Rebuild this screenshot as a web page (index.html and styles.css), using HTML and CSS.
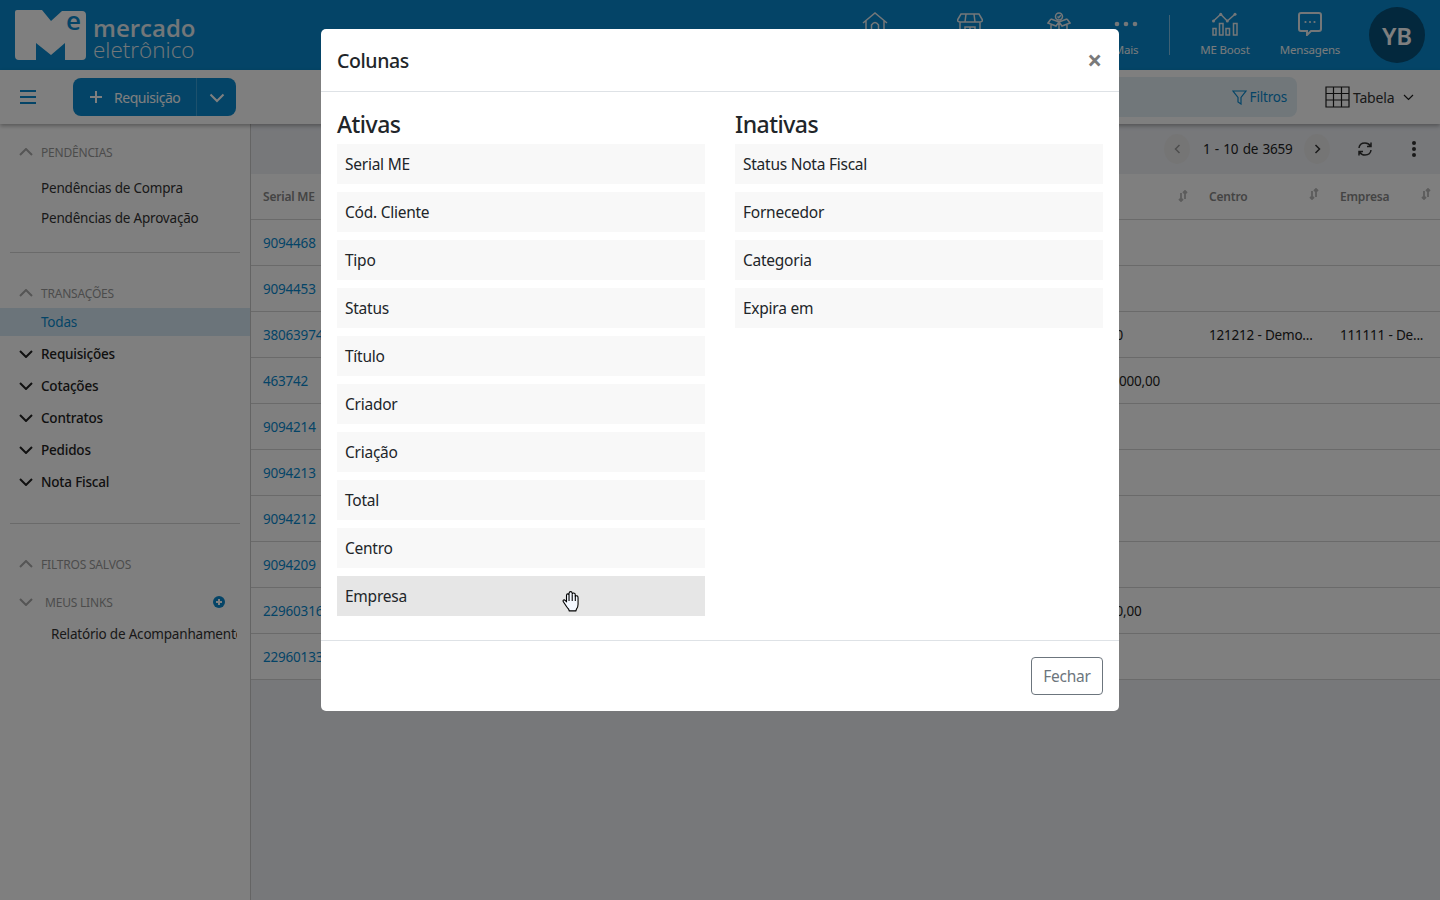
FILE: index.html
```html
<!DOCTYPE html>
<html lang="en">
<head>
    <meta charset="UTF-8">
    <title>Mercado Eletrônico</title>
    <link rel="stylesheet" href="styles.css">
</head>
<body>

<header class="topbar">
    <div class="logo">
        <svg class="logo-mark" width="71" height="50" viewBox="0 0 71 50">
            <path d="M2 0H27L36 11L47 1H67Q71 1 71 5V46Q71 50 67 50H50V33L36 45L21 33V50H4Q0 50 0 46V2Q0 0 2 0Z"/>
            <text x="51" y="20" class="logo-e">e</text>
        </svg>
        <div class="logo-text">
            <span class="logo-top">mercado</span>
            <span class="logo-bottom">eletrônico</span>
        </div>
    </div>
    <nav class="topnav">
        <a class="nav-item nav-home">
            <svg width="26" height="24" viewBox="0 0 26 24"><path d="M1 11L13 1L25 11M4 9V24H22V9M9.500 24V13Q13 8 16.500 13V24"/></svg>
            <span>Início</span>
        </a>
        <a class="nav-item nav-store">
            <svg width="26" height="24" viewBox="0 0 26 24"><path d="M4 2H22L25.500 8Q25.500 10 23 10H3Q0.500 10 0.500 8ZM9 2L8 10M17 2L18 10M3 10V24H23V10M8 24V15H13V24M13 15H18V24"/></svg>
            <span>Loja</span>
        </a>
        <a class="nav-item nav-gift">
            <svg width="24" height="24" viewBox="0 0 24 24"><path d="M4 7L12 10L20 7M4 7L1 11L9 14L12 10L15 14L23 11L20 7M4 13V24H20V13M12 10V24M8.500 4.500A3.500 3.500 0 1 1 15.500 4.500A3.500 3.500 0 1 1 8.500 4.500M10.500 4.500L11.700 5.700L13.800 3.300"/></svg>
            <span>Serviços</span>
        </a>
        <a class="nav-item nav-more">
            <svg width="24" height="24" viewBox="0 0 24 24"><circle class="dot" cx="3" cy="12" r="2.300"/><circle class="dot" cx="12" cy="12" r="2.300"/><circle class="dot" cx="21" cy="12" r="2.300"/></svg>
            <span>Mais</span>
        </a>
        <div class="nav-divider"></div>
        <a class="nav-item nav-boost">
            <svg width="26" height="24" viewBox="0 0 26 24"><path d="M1.500 9L8.700 2.300L15.300 9L23 2.300M1 16.500H4V23H1ZM7.500 11.500H11V23H7.500ZM14 16.500H17.500V23H14ZM21.500 11.500H25V23H21.500Z"/><circle class="dot" cx="1.500" cy="9" r="1.500"/><circle class="dot" cx="8.700" cy="2.300" r="1.500"/><circle class="dot" cx="15.300" cy="9" r="1.500"/><circle class="dot" cx="23" cy="2.300" r="1.500"/></svg>
            <span>ME Boost</span>
        </a>
        <a class="nav-item nav-msg">
            <svg class="msg-icon" width="24" height="24" viewBox="0 0 24 24"><path d="M3 1H21Q23 1 23 3V17Q23 19 21 19H13L9 23V19H3Q1 19 1 17V3Q1 1 3 1Z"/><circle class="dot" cx="7.500" cy="10" r="1.100"/><circle class="dot" cx="12" cy="10" r="1.100"/><circle class="dot" cx="16.500" cy="10" r="1.100"/></svg>
            <span>Mensagens</span>
        </a>
        <div class="avatar">YB</div>
    </nav>
</header>

<div class="toolbar">
    <svg class="burger" width="16" height="14" viewBox="0 0 16 14"><path d="M0 1H16M0 7H16M0 13H16"/></svg>
    <div class="btn-split">
        <button class="btn-main">
            <svg class="plus" width="14" height="14" viewBox="0 0 14 14"><path d="M7 1V13M1 7H13"/></svg>
            Requisição
        </button>
        <button class="btn-caret">
            <svg width="16" height="10" viewBox="0 0 16 10"><path d="M1.500 1.500L8 8L14.500 1.500"/></svg>
        </button>
    </div>
    <div class="filter-box">
        <svg width="15" height="15" viewBox="0 0 15 15"><path d="M1 1H14L9 7.500V14L6 12V7.500Z"/></svg>
        Filtros
    </div>
    <div class="view-select">
        <svg width="25" height="22" viewBox="0 0 25 22"><path d="M1 1H24V21H1ZM1 7.500H24M1 14H24M8.500 1V21M16.500 1V21"/></svg>
        Tabela
        <svg class="view-caret" width="11" height="7" viewBox="0 0 11 7"><path d="M1 1L5.500 5.500L10 1"/></svg>
    </div>
</div>

<div class="content">
    <aside class="sidebar">
        <div class="side-title"><svg class="chev" viewBox="0 0 14 8"><path d="M1 7L7 1L13 7"/></svg>Pendências</div>
        <a class="side-link side-link-first">Pendências de Compra</a>
        <a class="side-link">Pendências de Aprovação</a>
        <hr class="side-rule">
        <div class="side-title"><svg class="chev" viewBox="0 0 14 8"><path d="M1 7L7 1L13 7"/></svg>Transações</div>
        <a class="side-active">Todas</a>
        <a class="side-group"><svg class="chev" viewBox="0 0 14 8"><path d="M1 1L7 7L13 1"/></svg>Requisições</a>
        <a class="side-group"><svg class="chev" viewBox="0 0 14 8"><path d="M1 1L7 7L13 1"/></svg>Cotações</a>
        <a class="side-group"><svg class="chev" viewBox="0 0 14 8"><path d="M1 1L7 7L13 1"/></svg>Contratos</a>
        <a class="side-group"><svg class="chev" viewBox="0 0 14 8"><path d="M1 1L7 7L13 1"/></svg>Pedidos</a>
        <a class="side-group"><svg class="chev" viewBox="0 0 14 8"><path d="M1 1L7 7L13 1"/></svg>Nota Fiscal</a>
        <hr class="side-rule side-rule-2">
        <div class="side-title"><svg class="chev" viewBox="0 0 14 8"><path d="M1 7L7 1L13 7"/></svg>Filtros salvos</div>
        <div class="side-links-head">
            <svg class="chev" viewBox="0 0 14 8"><path d="M1 1L7 7L13 1"/></svg>
            <span>Meus links</span>
            <svg class="add-link" width="12" height="12" viewBox="0 0 12 12"><circle cx="6" cy="6" r="6"/><path d="M6 3V9M3 6H9"/></svg>
        </div>
        <a class="side-sublink">Relatório de Acompanhamento</a>
    </aside>

    <main class="main">
        <div class="pager-bar">
            <span class="round-btn"><svg width="7" height="10" viewBox="0 0 7 10"><path d="M5.500 1L1.500 5L5.500 9"/></svg></span>
            <span class="pager-text">1 - 10 de 3659</span>
            <span class="round-btn round-next"><svg width="7" height="10" viewBox="0 0 7 10"><path d="M1.500 1L5.500 5L1.500 9"/></svg></span>
            <svg class="refresh" width="16" height="16" viewBox="0 0 16 16"><path d="M2 7Q2.500 2 8 2Q11.500 2 13.500 5M14 1.500V5.500H10M14 9Q13.500 14 8 14Q4.500 14 2.500 11M2 14.500V10.500H6"/></svg>
            <svg class="kebab" width="4" height="16" viewBox="0 0 4 16"><circle cx="2" cy="2" r="2"/><circle cx="2" cy="8" r="2"/><circle cx="2" cy="14" r="2"/></svg>
        </div>
        <table class="grid">
            <colgroup>
                <col class="col-serial">
                <col class="col-middle">
                <col class="col-total">
                <col class="col-centro">
                <col class="col-empresa">
            </colgroup>
            <thead>
                <tr>
                    <th>Serial ME</th>
                    <th></th>
                    <th><svg class="sort" width="10" height="12" viewBox="0 0 10 12"><path d="M3 3V11M1 9L3 11L5 9M7 9V1M5 3L7 1L9 3"/></svg></th>
                    <th>Centro<svg class="sort" width="10" height="12" viewBox="0 0 10 12"><path d="M3 3V11M1 9L3 11L5 9M7 9V1M5 3L7 1L9 3"/></svg></th>
                    <th>Empresa<svg class="sort" width="10" height="12" viewBox="0 0 10 12"><path d="M3 3V11M1 9L3 11L5 9M7 9V1M5 3L7 1L9 3"/></svg></th>
                </tr>
            </thead>
            <tbody>
                <tr><td><a>9094468</a></td><td></td><td></td><td></td><td></td></tr>
                <tr><td><a>9094453</a></td><td></td><td></td><td></td><td></td></tr>
                <tr><td><a>38063974</a></td><td></td><td>R$ 100,00</td><td>121212 - Demo...</td><td>111111 - De...</td></tr>
                <tr><td><a>463742</a></td><td></td><td>R$ 1.000.000,00</td><td></td><td></td></tr>
                <tr><td><a>9094214</a></td><td></td><td></td><td></td><td></td></tr>
                <tr><td><a>9094213</a></td><td></td><td></td><td></td><td></td></tr>
                <tr><td><a>9094212</a></td><td></td><td></td><td></td><td></td></tr>
                <tr><td><a>9094209</a></td><td></td><td></td><td></td><td></td></tr>
                <tr><td><a>22960316</a></td><td></td><td>R$ 10.000,00</td><td></td><td></td></tr>
                <tr><td><a>22960133</a></td><td></td><td></td><td></td><td></td></tr>
            </tbody>
        </table>
    </main>
</div>

<div class="backdrop"></div>

<div class="modal-wrap">
    <div class="modal">
        <div class="modal-header">
            <h5>Colunas</h5>
            <button class="modal-close">×</button>
        </div>
        <div class="modal-body">
            <div class="col-list">
                <h3>Ativas</h3>
                <div class="col-item">Serial ME</div>
                <div class="col-item">Cód. Cliente</div>
                <div class="col-item">Tipo</div>
                <div class="col-item">Status</div>
                <div class="col-item">Título</div>
                <div class="col-item">Criador</div>
                <div class="col-item">Criação</div>
                <div class="col-item">Total</div>
                <div class="col-item">Centro</div>
                <div class="col-item col-item-hover">
                    Empresa
                    <svg class="hand" width="22" height="22" viewBox="0 0 20 20">
                        <path d="M5 15L2 10.500Q1.500 9 3 9L5 10.500V5Q5 3.500 6.200 3.500Q7 3.500 7.300 4.500V3Q7.500 1.500 8.800 1.500Q10 1.500 10.200 3V4Q10.500 2.500 11.800 2.800Q13 3 13 4.500V6Q13.500 5 14.500 5.300Q15.500 5.600 15.500 7V13Q15.500 16 14 17.500L13.500 19H7.500L7 17.500Q6 16.500 5 15Z"/>
                        <path class="hand-line" d="M7.300 4.500V10M10.200 4V10M13 5V10"/>
                    </svg>
                </div>
            </div>
            <div class="col-list">
                <h3>Inativas</h3>
                <div class="col-item">Status Nota Fiscal</div>
                <div class="col-item">Fornecedor</div>
                <div class="col-item">Categoria</div>
                <div class="col-item">Expira em</div>
            </div>
        </div>
        <div class="modal-footer">
            <button class="btn-close-modal">Fechar</button>
        </div>
    </div>
</div>

</body>
</html>
```

FILE: styles.css
```css
* {
    box-sizing: border-box;
}
body {
    font-family: "Noto Sans", "Open Sans", sans-serif;
    font-size: 13.5px;
    letter-spacing: -0.2px;
    color: #212529;
    background-color: #eef0f5;
    margin: 0;
    height: 900px;
    overflow: hidden;
}
svg path {
    fill: none;
}

/* top bar */
.topbar {
    display: flex;
    align-items: center;
    justify-content: space-between;
    height: 70px;
    background-color: #0889ce;
    padding: 0 15px;
}
.logo {
    display: flex;
    align-items: center;
    gap: 7px;
}
.logo-mark {
    display: block;
    overflow: visible;
}
.logo-mark path {
    fill: #ffffff;
}
.logo-e {
    font-family: "Open Sans", sans-serif;
    font-size: 26px;
    font-weight: 600;
    fill: #0889ce;
}
.logo-text {
    display: flex;
    flex-direction: column;
    gap: 1px;
    margin-top: 7px;
    color: #e6eef3;
    letter-spacing: 0;
}
.logo-top {
    font-family: "Open Sans", sans-serif;
    font-size: 24px;
    font-weight: 600;
    line-height: 22px;
}
.logo-bottom {
    font-family: "Open Sans", sans-serif;
    font-size: 22.5px;
    font-weight: 300;
    line-height: 20px;
}
.topnav {
    display: flex;
    align-items: center;
}
.nav-item {
    display: flex;
    flex-direction: column;
    align-items: center;
    gap: 6px;
    width: 70px;
    font-size: 11.5px;
    line-height: 16px;
    color: #f2f6f8;
}
.nav-item svg {
    display: block;
}
.nav-item path {
    stroke: #e8eef2;
    stroke-width: 1.500;
}
.nav-item .dot {
    fill: #e8eef2;
}
.msg-icon path {
    stroke-width: 2;
}
.nav-store {
    margin-left: 25px;
}
.nav-gift {
    margin-left: 19px;
}
.nav-more {
    width: 50px;
    margin-left: 7px;
}
.nav-divider {
    width: 1px;
    height: 40px;
    background-color: #7fc3e8;
    margin: 0 19px 0 18px;
}
.nav-boost {
    width: 72px;
}
.nav-msg {
    width: 76px;
    margin-left: 11px;
}
.avatar {
    display: flex;
    align-items: center;
    justify-content: center;
    width: 56px;
    height: 56px;
    border-radius: 50%;
    margin-left: 21px;
    background-color: #06507a;
    color: #ffffff;
    font-size: 24px;
    font-weight: 600;
}

/* toolbar */
.toolbar {
    display: flex;
    align-items: center;
    height: 54px;
    background-color: #ffffff;
    padding: 0 15px 0 20px;
    box-shadow: 0 2px 4px rgba(0, 0, 0, 0.3);
    position: relative;
}
.burger path {
    stroke: #0889ce;
    stroke-width: 2;
}
.btn-split {
    display: flex;
    height: 38px;
    margin-left: 37px;
    border-radius: 8px;
    overflow: hidden;
}
.btn-split button {
    border: none;
    background-color: #0889ce;
    color: #ffffff;
    font-family: inherit;
    font-size: 14px;
    letter-spacing: -0.45px;
}
.btn-main {
    display: flex;
    align-items: center;
    gap: 11px;
    width: 124px;
    padding: 0 0 0 16px;
    border-right: 1px solid #3ba3db !important;
}
.plus path {
    stroke: #ffffff;
    stroke-width: 2;
}
.btn-caret {
    width: 39px;
    padding: 0;
}
.btn-caret path {
    stroke: #ffffff;
    stroke-width: 2;
}
.filter-box {
    display: flex;
    align-items: center;
    justify-content: flex-end;
    gap: 3px;
    width: 300px;
    height: 40px;
    margin-left: auto;
    padding-right: 10px;
    background-color: #e2eef5;
    border-radius: 8px;
    color: #0889ce;
}
.filter-box path {
    stroke: #0889ce;
    stroke-width: 1.200;
}
.view-select {
    display: flex;
    align-items: center;
    gap: 3px;
    width: 100px;
    margin-left: 28px;
    color: #333333;
    font-size: 14px;
}
.view-select path {
    stroke: #1d1d1d;
    stroke-width: 1.200;
}
.view-caret {
    margin-left: 6px;
}

/* page body */
.content {
    display: flex;
    height: 776px;
}
.sidebar {
    width: 251px;
    flex-shrink: 0;
    background-color: #ffffff;
    border-right: 1px solid #c8c8c8;
    padding-top: 19px;
    color: #333333;
}
.chev {
    width: 14px;
    height: 8px;
    margin: 0 8px 0 0;
}
.chev path {
    stroke-width: 2;
}
.side-title {
    display: flex;
    align-items: center;
    height: 18px;
    padding-left: 19px;
    font-size: 12px;
    text-transform: uppercase;
    color: #999999;
}
.side-title .chev path {
    stroke: #aaaaaa;
}
.side-link {
    display: block;
    padding-left: 41px;
    height: 30px;
    line-height: 30px;
}
.side-link-first {
    margin-top: 12px;
}
.side-rule {
    border: none;
    border-top: 1px solid #d5d5d5;
    margin: 19px 10px 31px;
}
.side-rule-2 {
    margin-top: 25px;
    margin-bottom: 31px;
}
.side-active {
    display: block;
    height: 28px;
    line-height: 28px;
    margin-top: 6px;
    padding-left: 41px;
    background-color: #d7e9f4;
    color: #0889ce;
}
.side-group {
    display: flex;
    align-items: center;
    height: 32px;
    padding-left: 19px;
    font-weight: 500;
    color: #222222;
}
.side-active + .side-group {
    margin-top: 2px;
}
.side-group .chev path {
    stroke: #222222;
}
.side-links-head {
    display: flex;
    align-items: center;
    height: 18px;
    margin-top: 20px;
    padding: 0 25px 0 19px;
    font-size: 12px;
    text-transform: uppercase;
    color: #999999;
}
.side-links-head .chev {
    margin-right: 12px;
}
.side-links-head .chev path {
    stroke: #aaaaaa;
}
.add-link {
    margin-left: auto;
}
.add-link circle {
    fill: #0889ce;
}
.add-link path {
    stroke: #ffffff;
    stroke-width: 2;
}
.side-sublink {
    display: block;
    margin: 14px 13px 0 51px;
    white-space: nowrap;
    overflow: hidden;
}

/* table */
.main {
    flex: 1;
    min-width: 0;
}
.pager-bar {
    display: flex;
    align-items: center;
    height: 50px;
    padding-right: 24px;
    justify-content: flex-end;
}
.round-btn {
    display: flex;
    align-items: center;
    justify-content: center;
    width: 26px;
    height: 30px;
    border-radius: 50%;
    background-color: #ebebeb;
}
.round-btn path {
    stroke: #9a9a9a;
    stroke-width: 1.500;
}
.round-next path {
    stroke: #333333;
}
.pager-text {
    width: 101px;
    margin-left: 13px;
    color: #222222;
    word-spacing: 1px;
}
.refresh {
    margin: 0 39px 0 27px;
}
.refresh path {
    stroke: #333333;
    stroke-width: 1.500;
}
.kebab circle {
    fill: #333333;
}
.grid {
    width: 100%;
    table-layout: fixed;
    border-collapse: collapse;
    background-color: #ffffff;
}
.col-serial {
    width: 120px;
}
.col-total {
    width: 146px;
}
.col-centro {
    width: 131px;
}
.col-empresa {
    width: 112px;
}
.grid th,
.grid td {
    height: 46px;
    padding: 2px 0 0 12px;
    text-align: left;
    white-space: nowrap;
    overflow: hidden;
    border-bottom: 1px solid #d4d4d4;
}
.grid th {
    height: 45px;
    padding-top: 0;
    font-size: 12px;
    font-weight: 600;
    color: #888888;
}
.grid td {
    color: #222222;
}
.grid a {
    color: #0889ce;
}
.sort {
    float: right;
    margin-right: 9px;
}
.sort path {
    stroke: #b8b8b8;
    stroke-width: 1.800;
}

/* modal */
.backdrop {
    position: fixed;
    top: 0;
    left: 0;
    width: 100%;
    height: 100%;
    background-color: rgba(0, 0, 0, 0.5);
    z-index: 1050;
}
.modal-wrap {
    position: fixed;
    top: 29px;
    left: 0;
    width: 100%;
    z-index: 1060;
    display: flex;
    justify-content: center;
}
.modal {
    width: 798px;
    background-color: #ffffff;
    border-radius: 5px;
}
.modal-header {
    display: flex;
    align-items: center;
    justify-content: space-between;
    height: 63px;
    padding: 0 17px 0 16px;
    border-bottom: 1px solid #dee2e6;
}
.modal-header h5 {
    margin: 0;
    font-size: 19.500px;
    font-weight: 500;
    letter-spacing: -0.4px;
}
.modal-close {
    border: none;
    background: none;
    padding: 0;
    font-size: 26px;
    font-weight: 700;
    line-height: 1;
    color: #7a7a7a;
    font-family: inherit;
}
.modal-body {
    display: grid;
    grid-template-columns: 368px 368px;
    column-gap: 30px;
    padding: 16px 16px 24px;
    height: 548px;
}
.col-list h3 {
    margin: 0;
    height: 36px;
    line-height: 32px;
    font-size: 23px;
    font-weight: 500;
    letter-spacing: -0.5px;
}
.col-item {
    display: flex;
    align-items: center;
    height: 40px;
    margin-bottom: 8px;
    padding-left: 8px;
    background-color: #f8f8f8;
    font-size: 15.500px;
    letter-spacing: -0.25px;
    position: relative;
}
.col-item-hover {
    background-color: #e6e6e6;
}
.hand {
    position: absolute;
    left: 224px;
    top: 14px;
}
.hand path {
    fill: #f4f8ff;
    stroke: #000000;
    stroke-width: 1;
}
.hand .hand-line {
    fill: none;
}
.modal-footer {
    display: flex;
    justify-content: flex-end;
    align-items: center;
    height: 71px;
    padding: 0 16px;
    border-top: 1px solid #dee2e6;
}
.btn-close-modal {
    width: 72px;
    height: 38px;
    border: 1px solid #6c757d;
    border-radius: 4px;
    background: none;
    color: #6c757d;
    font-family: inherit;
    font-size: 15.500px;
    letter-spacing: -0.25px;
}
```
